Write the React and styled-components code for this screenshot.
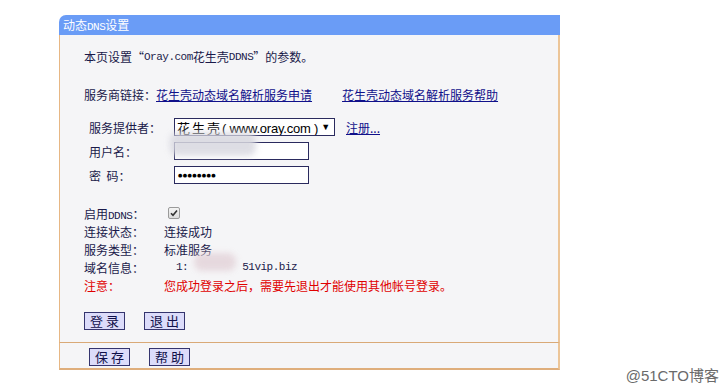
import styled, { createGlobalStyle } from 'styled-components';

const GlobalStyle = createGlobalStyle`
  html, body {
    margin: 0;
    padding: 0;
    background: #ffffff;
  }
  body {
    font-family: "Noto Sans CJK SC", "DejaVu Sans", sans-serif;
    font-size: 12px;
    color: #1a1a4a;
  }
`;

const Page = styled.div`
  position: relative;
  width: 728px;
  height: 392px;
  padding: 15px 0 0 59px;
  box-sizing: border-box;
`;

const Panel = styled.div`
  width: 501px;
`;

const Header = styled.div`
  height: 20px;
  line-height: 20px;
  background: #6a9cf6;
  border-top-left-radius: 7px;
  color: #ffffff;
  font-size: 12px;
  padding-left: 4px;
`;

const Body = styled.div`
  background: #f5f5f7;
  border-left: 1px solid #e7b784;
  border-right: 2px solid #ecc598;
  padding: 14px 0 12px 24px;
  display: flex;
  flex-direction: column;
`;

const Line = styled.div`
  height: 16px;
  line-height: 16px;
  display: flex;
  align-items: center;
  margin-top: ${({ $top }) => $top || 0}px;
  white-space: nowrap;
`;

const Mono = styled.span`
  font-family: "Liberation Mono", "DejaVu Sans Mono", monospace;
  font-size: 11px;
  letter-spacing: -0.5px;
  margin-left: ${({ $left }) => $left || 0}px;
`;

const Link = styled.a`
  color: #10108a;
  text-decoration: underline;
  margin-left: ${({ $left }) => $left || 0}px;
  cursor: pointer;
`;

const FormTable = styled.div`
  margin: 12px 0 0 5px;
  display: grid;
  grid-template-columns: 85px auto;
  grid-auto-rows: 24px;
  align-items: center;
`;

const Field = styled.div`
  display: flex;
  align-items: center;
  position: relative;
`;

const Select = styled.div`
  width: 153px;
  height: 16px;
  border: 1px solid #2a2a5e;
  background: #ffffff;
  display: flex;
  align-items: center;
  justify-content: space-between;
  padding: 0 4px 0 2px;
  color: #000;
  font-family: "Liberation Sans", Arial, sans-serif;
  font-size: 13px;
  letter-spacing: -0.2px;
  white-space: nowrap;
  overflow: hidden;
`;

const Spaced = styled.span`
  font-family: "Noto Sans CJK SC", sans-serif;
  letter-spacing: 2px;
`;

const Arrow = styled.span`
  font-size: 9px;
  color: #000;
`;

const TextInput = styled.div`
  width: 130px;
  height: 16px;
  border: 1px solid #2a2a5e;
  background: #ffffff;
  display: flex;
  align-items: center;
  padding-left: 3px;
  font-family: "DejaVu Sans", sans-serif;
  font-size: 5px;
  letter-spacing: 0.4px;
  color: #000;
`;

const Smudge = styled.span`
  position: absolute;
  left: ${({ $left }) => $left}px;
  top: ${({ $top }) => $top}px;
  width: ${({ $w }) => $w}px;
  height: ${({ $h }) => $h}px;
  background: ${({ $color }) => $color};
  border-radius: 8px;
  filter: blur(3px);
  opacity: 0.85;
`;

const StatusTable = styled.div`
  margin-top: 17px;
  display: grid;
  grid-template-columns: 80px auto;
  grid-auto-rows: 18px;
  align-items: center;
`;

const RedCell = styled.div`
  color: #e00000;
  white-space: nowrap;
`;

const Check = styled.span`
  width: 10px;
  height: 10px;
  margin-left: 4px;
  border: 1px solid #9a9a9a;
  border-radius: 2px;
  background: linear-gradient(#f4f4f4, #dcdcdc);
  display: flex;
  align-items: center;
  justify-content: center;
`;

const ButtonRow = styled.div`
  display: flex;
  gap: 19px;
  margin-top: ${({ $top }) => $top || 0}px;
`;

const Button = styled.button`
  width: 41px;
  height: 18px;
  padding: 0;
  background: #dcdcfa;
  border: 1px solid #34346e;
  color: #10104a;
  font-family: "Noto Sans CJK SC", sans-serif;
  font-size: 13px;
  line-height: 16px;
  letter-spacing: 3px;
  text-indent: 3px;
`;

const Footer = styled.div`
  background: #f5f5f7;
  border-top: 1px solid #d9a977;
  border-bottom: 2px solid #dfae7c;
  border-left: 1px solid #e7b784;
  border-right: 2px solid #ecc598;
  height: 28px;
  padding: 5px 0 0 29px;
  box-sizing: border-box;
`;

const Watermark = styled.div`
  position: absolute;
  right: 9px;
  bottom: 7px;
  color: #6a6a6a;
  font-family: "Liberation Sans", "Noto Sans CJK SC", sans-serif;
  font-size: 15px;
`;

export default function App() {
  return (
    <>
      <GlobalStyle />
      <Page>
        <Panel>
          <Header>动态<Mono>DNS</Mono>设置</Header>
          <Body>
            <Line>
              本页设置“<Mono>Oray.com</Mono>花生壳<Mono>DDNS</Mono>”的参数。
            </Line>
            <Line $top={22}>
              服务商链接：
              <Link>花生壳动态域名解析服务申请</Link>
              <Link $left={30}>花生壳动态域名解析服务帮助</Link>
            </Line>

            <FormTable>
              <span>服务提供者：</span>
              <Field>
                <Select>
                  <span><Spaced>花生壳</Spaced>( www.oray.com )</span>
                  <Arrow>▼</Arrow>
                </Select>
                <Link $left={11}>注册...</Link>
              </Field>
              <span>用户名：</span>
              <Field>
                <TextInput />
                <Smudge $left={-4} $top={-10} $w={86} $h={24} $color="#d8d8e0" />
              </Field>
              <span>密&nbsp;&nbsp;码：</span>
              <Field>
                <TextInput>●●●●●●●●</TextInput>
              </Field>
            </FormTable>

            <StatusTable>
              <span>启用<Mono>DDNS</Mono>：</span>
              <Field>
                <Check>
                  <svg width="8" height="8" viewBox="0 0 8 8">
                    <path d="M1 4.2 L3 6.3 L7 1.4" fill="none" stroke="#333" strokeWidth="1.6" />
                  </svg>
                </Check>
              </Field>
              <span>连接状态：</span>
              <span>连接成功</span>
              <span>服务类型：</span>
              <span>标准服务</span>
              <span>域名信息：</span>
              <Field>
                <Mono $left={12}>1:</Mono>
                <Smudge $left={30} $top={-8} $w={42} $h={18} $color="#e4d4da" />
                <Mono $left={54}>51vip.biz</Mono>
              </Field>
              <RedCell>注意：</RedCell>
              <RedCell>您成功登录之后，需要先退出才能使用其他帐号登录。</RedCell>
            </StatusTable>

            <ButtonRow $top={18}>
              <Button>登录</Button>
              <Button>退出</Button>
            </ButtonRow>
          </Body>
          <Footer>
            <ButtonRow>
              <Button>保存</Button>
              <Button>帮助</Button>
            </ButtonRow>
          </Footer>
        </Panel>
        <Watermark>@51CTO博客</Watermark>
      </Page>
    </>
  );
}
